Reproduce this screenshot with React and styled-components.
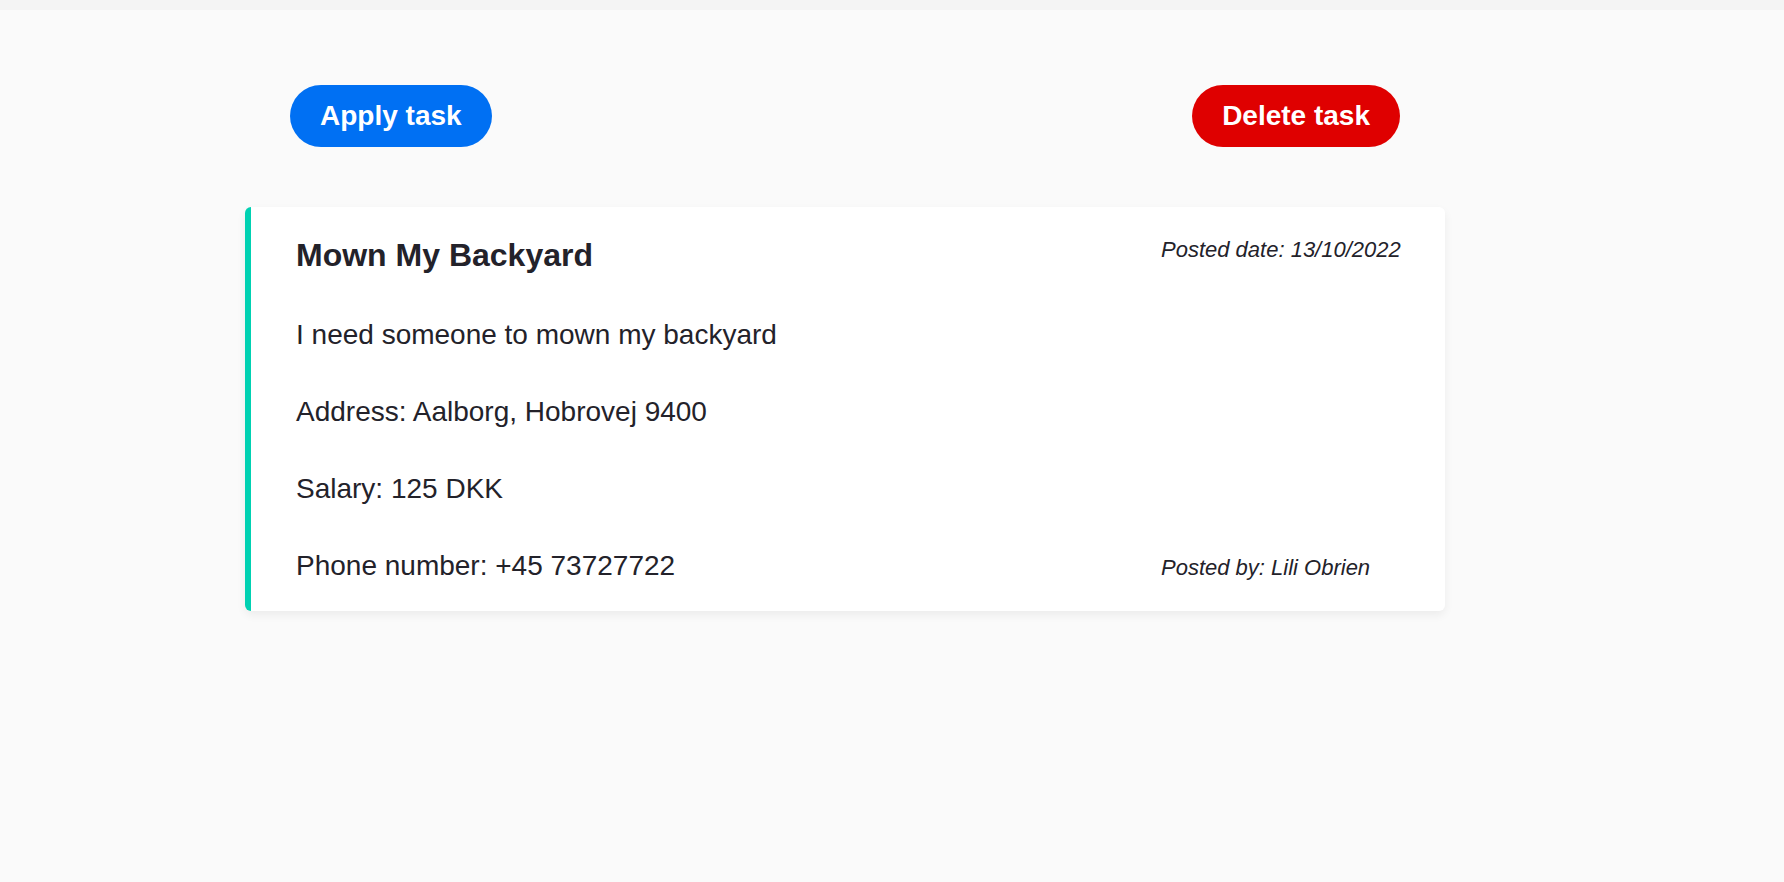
import React from "react";
import styled, { createGlobalStyle } from "styled-components";

const GlobalStyle = createGlobalStyle`
  html, body {
    margin: 0;
    padding: 0;
    background: #fafafa;
    font-family: "Liberation Sans", Arial, Helvetica, sans-serif;
    color: #23222a;
  }
  * { box-sizing: border-box; }
`;

const TopBar = styled.div`
  height: 10px;
  background: #f4f4f4;
`;

const Main = styled.main`
  padding: 75px 0 80px 245px;
  min-height: 872px;
`;

const Container = styled.div`
  width: 1200px;
  display: flex;
  flex-direction: column;
  gap: 60px;
`;

const ActionRow = styled.div`
  display: flex;
  justify-content: space-between;
  padding: 0 45px;
`;

const PillButton = styled.button`
  height: 62px;
  padding: 0 30px;
  border: none;
  border-radius: 31px;
  background: ${(p) => (p.$variant === "danger" ? "#df0000" : "#0070f3")};
  color: #ffffff;
  font-family: "Liberation Sans", Arial, Helvetica, sans-serif;
  font-weight: 700;
  font-size: 28px;
  cursor: pointer;
`;

const Card = styled.article`
  background: #ffffff;
  border-left: 6px solid #00d1b2;
  border-radius: 6px;
  box-shadow: 0 4px 10px rgba(0, 0, 0, 0.06);
  padding: 30px 44px 29px 45px;
  display: flex;
  flex-direction: column;
  gap: 45px;
`;

const Row = styled.div`
  display: flex;
  justify-content: space-between;
  align-items: ${(p) => (p.$baseline ? "baseline" : "flex-start")};
`;

const Title = styled.h2`
  margin: 0;
  font-size: 32px;
  font-weight: 700;
  color: #23222a;
`;

const Line = styled.p`
  margin: 0;
  font-size: 28px;
  color: #23222a;
`;

const Meta = styled.span`
  width: 240px;
  font-size: 22px;
  font-style: italic;
  color: #23222a;
  white-space: nowrap;
`;

export default function App() {
  return (
    <>
      <GlobalStyle />
      <TopBar />
      <Main>
        <Container>
          <ActionRow>
            <PillButton>Apply task</PillButton>
            <PillButton $variant="danger">Delete task</PillButton>
          </ActionRow>
          <Card>
            <Row>
              <Title>Mown My Backyard</Title>
              <Meta>Posted date: 13/10/2022</Meta>
            </Row>
            <Line>I need someone to mown my backyard</Line>
            <Line>Address: Aalborg, Hobrovej 9400</Line>
            <Line>Salary: 125 DKK</Line>
            <Row $baseline>
              <Line>Phone number: +45 73727722</Line>
              <Meta>Posted by: Lili Obrien</Meta>
            </Row>
          </Card>
        </Container>
      </Main>
    </>
  );
}
